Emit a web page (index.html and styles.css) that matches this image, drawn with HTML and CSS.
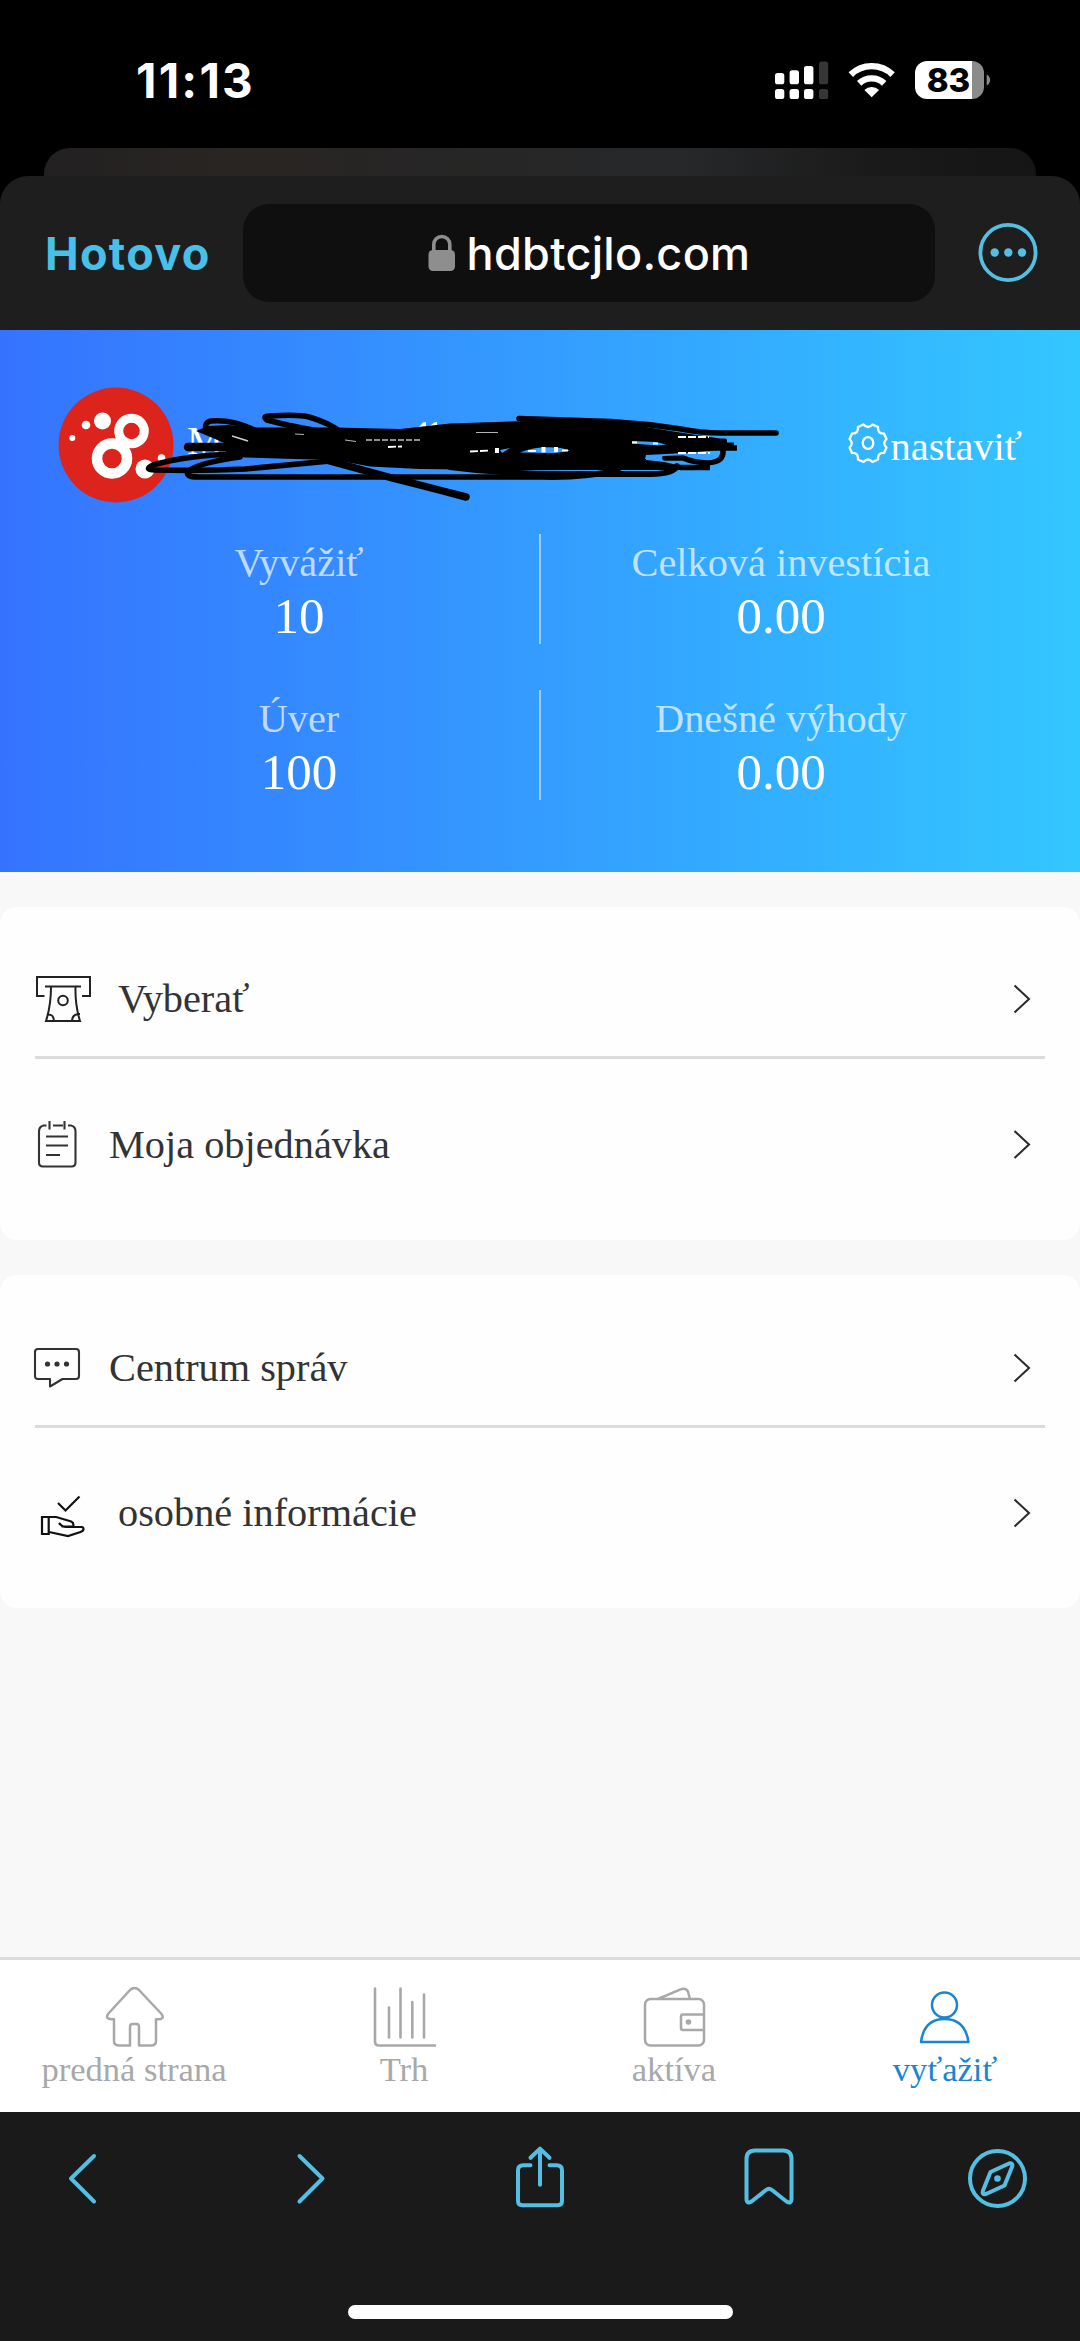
FILE: index.html
```html
<!DOCTYPE html>
<html lang="sk">
<head>
<meta charset="utf-8">
<title>hdbtcjlo.com</title>
<link rel="stylesheet" href="styles.css">
</head>
<body>
<div class="screen">
  <header class="status">
    <span class="clock">11:13</span>
    <svg class="status-icons" viewBox="770 55 225 50" width="225" height="50">
      <g fill="#fff">
        <rect x="775" y="73" width="9.3" height="11.3" rx="2.6"/><rect x="789.6" y="70.3" width="9.4" height="14" rx="2.6"/><rect x="804" y="66" width="9.4" height="18.3" rx="2.6"/>
        <rect x="775" y="89" width="9.3" height="10" rx="2.6"/><rect x="789.6" y="89" width="9.4" height="10" rx="2.6"/><rect x="804" y="89" width="9.4" height="10" rx="2.6"/>
      </g>
      <g fill="#363636"><rect x="819" y="61.6" width="9.2" height="22.7" rx="2.6"/><rect x="819" y="89" width="9.2" height="10" rx="2.6"/></g>
      <g fill="none" stroke="#fff" stroke-width="6.4">
        <path d="M850.8 74.6a30 30 0 0 1 41.8 0"/>
        <path d="M859.2 83.4a18 18 0 0 1 25 0"/>
      </g>
      <path d="M871.7 97.3l-7.3-7.4a10.6 10.6 0 0 1 14.6 0z" fill="#fff"/>
      <clipPath id="batt"><rect x="915" y="61" width="69" height="38" rx="12"/></clipPath>
      <g clip-path="url(#batt)"><rect x="915" y="61" width="57" height="38" fill="#fff"/><rect x="972" y="61" width="12" height="38" fill="#8b8b8b"/></g>
      <path d="M986.7 74.5c4.600 2.500 4.600 8.500 0 11z" fill="#8b8b8b"/>
      <text class="battery-text" x="948.500" y="92" text-anchor="middle">83</text>
    </svg>
  </header>
  <div class="back-card"></div>
  <section class="sheet">
    <div class="address-bar">
      <span class="done">Hotovo</span>
      <div class="url">
        <svg class="lock" viewBox="0 0 28 36" width="28" height="36"><rect x="0.500" y="15" width="26.500" height="21" rx="4.500" fill="#8e8e8e"/><path d="M5.800 17v-7.500a8 8 0 0 1 16 0V17" fill="none" stroke="#8e8e8e" stroke-width="3.600"/></svg>
        <span>hdbtcjlo.com</span>
      </div>
      <svg class="more" viewBox="0 0 60 60" width="60" height="60"><circle cx="30" cy="29.500" r="27.600" fill="none" stroke="#54bfe2" stroke-width="3.800"/><g fill="#54bfe2"><circle cx="16.700" cy="29.500" r="4.200"/><circle cx="30.300" cy="29.500" r="4.200"/><circle cx="44" cy="29.500" r="4.200"/></g></svg>
    </div>
  </section>
  <main class="page">
    <section class="hero">
      <div class="profile">
        <svg class="avatar" viewBox="0 0 116 116" width="116" height="116">
          <circle cx="58" cy="58" r="57.500" fill="#dc241d"/>
          <g fill="none" stroke="#fff"><circle cx="73.500" cy="44" r="12.800" stroke-width="9"/><circle cx="54" cy="71.500" r="15" stroke-width="10.500"/></g>
          <g fill="#fff"><circle cx="44.500" cy="34" r="8.500"/><circle cx="28" cy="38" r="4.300"/><circle cx="14.300" cy="51" r="3"/><circle cx="87" cy="82" r="9.500"/><circle cx="103.500" cy="71" r="3.800"/></g>
        </svg>
        <span class="name">M</span>
        <div class="settings">
          <svg viewBox="0 0 44 44" width="44" height="44"><g fill="none" stroke="#fff" stroke-width="2.300" stroke-linejoin="round"><path d="M17.500 3.500Q22 8.500 26.500 3.500L32 6Q31.500 13 38 12.500L40.500 18Q36 22 40.500 26.500L38 32Q31.500 31.500 32 38.500L26.500 41Q22 36 17.500 41L12 38.500Q12.500 31.500 6 32L3.500 26.500Q8 22 3.500 18L6 12.500Q12.500 13 12 6z"/><ellipse cx="22" cy="22" rx="5.300" ry="5.800"/></g></svg>
          <span>nastaviť</span>
        </div>
      </div>
      <svg class="scribble" viewBox="140 400 660 110" width="660" height="110">
        <path d="M419 427l4-4.500 3-.5v5zM430 426l4-3.500 3-.5v4zM490 424q5-4 9 0zM598 424h16v2h-16zM288 425v-2.500h3v2.500z" fill="#fff"/>
        <path d="M196 431l12-5 20-1 27 2.500h80l65 1.500 50-5.500 60-2 55-1.500 62 4 50 8 43 6.500h6v4h8v6l-54 5-34 2.500v4l18 2 18 4v4H500l-80-1-50-2.500-35-6.500-40-1-50-1.500-20-3 3-10z" fill="#000"/>
        <g fill="none" stroke="#000" stroke-width="5.600" stroke-linecap="round" stroke-linejoin="round">
          <path d="M206 431q-2-9 5-10q20-2 44 9"/>
          <path d="M340 434Q300 429 267 420q-5-4 2-4q30-2 40 1q18 5 32 15"/>
          <path d="M188 447h60" stroke-width="8.500"/>
          <path d="M238 454q-50 1-85 11q-10 5 2 5q50 1 90-1l85-8"/>
          <path d="M240 457q-38 5-52 14q-3 6 10 6h345q42 1 75-7"/>
          <path d="M450 467q60 8 130 7h70q24 0 27-8" stroke-width="6"/>
          <path d="M326 460l66 18q32 8 74 19" stroke-width="7.500"/>
          <path d="M519 418.500l92 3q35 2 70 7.500q20 4 40 4h55"/>
          <path d="M680 467.500h30M680 442h47M700 448h37" stroke-linecap="butt"/>
          <path d="M723 450q1 13-16 12.500q-14 0-24-4.500h-18"/>
        </g>
        <g fill="#39a2ff">
          <path d="M520 452.500q17-7 41-4.500l9 2.500-14 2.500zM646 455l30-1.500 30 .5 10 2-4 4q-14 1-26-5l-24 1v3h-17zM632 441l24 1 10 2.500-8 1-26-2zM500 450l10-2-8 5z"/>
        </g>
        <g fill="none" stroke="#fff" stroke-width="1.800">
          <path d="M232 436l16 5" opacity=".8"/><path d="M295 434l9 .5M345 440l11 1.500M476 432.500h22" stroke-width="1.200" opacity=".7"/>
          <path d="M366 440h54" stroke-width="1.300" stroke-dasharray="6 2" opacity=".75"/>
          <path d="M388 447l14-.5M470 451.500l20-1M528 451h8M562 450.500h6M632 442.500h5M653 443.500h5M678 437h31M678 453h32" stroke-dasharray="8 2"/>
          <path d="M543.500 447v5.500M556 447v5M497 448v5" stroke-width="4"/>
        </g>
      </svg>
      <div class="stats">
        <div class="stat"><span class="label">Vyvážiť</span><span class="value">10</span></div>
        <div class="stat"><span class="label">Celková investícia</span><span class="value">0.00</span></div>
        <div class="stat"><span class="label">Úver</span><span class="value">100</span></div>
        <div class="stat"><span class="label">Dnešné výhody</span><span class="value">0.00</span></div>
      </div>
    </section>
    <section class="card">
      <div class="row wide">
        <svg viewBox="0 0 56 56" width="56" height="56"><g fill="none" stroke="#222" stroke-width="2"><path d="M9.500 25H2V6h53v19h-8M10 15.500h36M16 16q0 18-5 34h34q-5-16-4.500-34M12 43.500q6.500-1 7 6.500M45 43q-8 0-8 7"/><circle cx="28" cy="29.500" r="4.800"/></g></svg>
        <span>Vyberať</span><svg class="arrow" viewBox="0 0 20 32" width="20" height="32"><path d="M2.500 2.500L17 16 2.500 29.500" fill="none" stroke="#2c2c2c" stroke-width="2.100"/></svg>
      </div>
      <div class="row">
        <svg viewBox="0 0 46 56" width="46" height="56"><g fill="none" stroke="#333" stroke-width="2.100"><path d="M11.500 8.500H8.500Q4 9.500 4 14.500v31q0 4 4 4h28.500q4 0 4-4v-31q0-5-4.500-6h-3M18 8.500h10M14.500 4v8.500M29.500 4v8.500M11 19.500h22M11 28.500h22M11 38h14"/></g></svg>
        <span>Moja objednávka</span><svg class="arrow" viewBox="0 0 20 32" width="20" height="32"><path d="M2.500 2L17 15.500 2.500 29" fill="none" stroke="#2c2c2c" stroke-width="2.100"/></svg>
      </div>
    </section>
    <section class="card second">
      <div class="row">
        <svg viewBox="0 0 46 56" width="46" height="56"><path d="M3 9h38q3 0 3 3v24q0 3-3 3H27.500L15 46.500V39H3q-3 0-3-3V12q0-3 3-3z" fill="none" stroke="#333" stroke-width="2.100" stroke-linejoin="round" overflow="visible"/><g fill="#333"><circle cx="12.500" cy="24" r="2.600"/><circle cx="22" cy="24" r="2.600"/><circle cx="31.500" cy="24" r="2.600"/></g></svg>
        <span>Centrum správ</span><svg class="arrow" viewBox="0 0 20 32" width="20" height="32"><path d="M2.500 2.500L17 16 2.500 29.500" fill="none" stroke="#2c2c2c" stroke-width="2.100"/></svg>
      </div>
      <div class="row wide">
        <svg viewBox="0 0 56 56" width="56" height="56"><g fill="none" stroke="#111" stroke-width="2.200"><path d="M23 18l7.500 7.500L44.500 11.500M7 32h6.700v17H7zM13.700 32h7.500l15 4.500q3 1.500 2 5H26.500M24 38q3 4 7 4h15.500q2 0 2 2t-3 3L33 51l-19-4"/></g></svg>
        <span>osobné informácie</span><svg class="arrow" viewBox="0 0 20 32" width="20" height="32"><path d="M2.500 2.500L17 16 2.500 29.500" fill="none" stroke="#2c2c2c" stroke-width="2.100"/></svg>
      </div>
    </section>
  </main>
  <nav class="tabs">
    <div class="tab"><svg viewBox="0 0 64 64" width="64" height="64"><path d="M28 4q4.500-4 9 0l22.500 24q3.500 5-3 5.200h-2.500V55q0 4.500-5 4.500H37V41q0-3-2.500-3h-4Q28 38 28 41v18.500H17.500Q12 59.500 12 55V33.200H9.500Q3 33 6 28z" fill="none" stroke="#a8a8a8" stroke-width="2.500" stroke-linejoin="round"/></svg><span>predná strana</span></div>
    <div class="tab"><svg viewBox="0 0 64 64" width="64" height="64"><path d="M3 2.500v53q0 4 4 4h56M17 21.500v30M28.500 2.500v49M40.300 16v35.500M52 8.500v43" fill="none" stroke="#a8a8a8" stroke-width="2.600" stroke-linecap="round"/></svg><span>Trh</span></div>
    <div class="tab"><svg viewBox="0 0 64 64" width="64" height="64"><g fill="none" stroke="#a8a8a8" stroke-width="2.500"><rect x="3" y="13" width="59" height="46.500" rx="5.500"/><path d="M16 13l22-9.300q6-2.500 8 2l2 7.300M62 28.500H41q-2 0-2 2v11.500q0 2 2 2h21"/></g><circle cx="46.500" cy="36" r="2.800" fill="#a8a8a8"/></svg><span>aktíva</span></div>
    <div class="tab active"><svg viewBox="0 0 64 64" width="64" height="64"><g fill="none" stroke="#1a85d0" stroke-width="2.500"><circle cx="31.500" cy="19" r="12.500"/><path d="M8 56Q11 33 31.500 33T55.500 56z" stroke-linejoin="round"/></g></svg><span>vyťažiť</span></div>
  </nav>
  <footer class="toolbar">
    <div class="tools">
      <svg viewBox="0 0 60 64" width="60" height="64"><path d="M42 9L19 31.500 42 54.500"/></svg>
      <svg viewBox="0 0 60 64" width="60" height="64"><path d="M18.500 9L41.500 31.500 18.500 54.500"/></svg>
      <svg viewBox="0 0 60 64" width="60" height="64"><path d="M20.500 17.500h-7q-5.500 0-5.500 5v30.500q0 4.500 4.500 4.500h35q4.500 0 4.500-4.500V22.500q0-5-5.500-5h-7M30 37V1.500M20.500 10L30 .8l9.500 9.200" transform="translate(0 .8)"/></svg>
      <svg viewBox="0 0 60 64" width="60" height="64"><path d="M7.500 12q0-8.500 8.500-8.500h28q8.500 0 8.500 8.500v39.500q0 6-5 3L33 43q-3-2.500-6 0L12.500 54.500q-5 3-5-3z"/></svg>
      <svg viewBox="0 0 60 64" width="60" height="64"><circle cx="29.500" cy="31.500" r="27.500"/><path d="M22.500 25L41 16.500q4-1 3.300 2.800L36.500 38.500 18 47q-4.500 1-3-3.500z"/><circle class="dot" cx="29.500" cy="31.500" r="3.300"/></svg>
    </div>
    <div class="home-indicator"></div>
  </footer>
</div>
</body>
</html>
```
FILE: styles.css
```css
* { box-sizing: border-box; }
body { margin: 0; background: #000; }
svg { display: block; flex: none; overflow: visible; }

.screen {
  width: 1080px;
  height: 2341px;
  display: flex;
  flex-direction: column;
  overflow: hidden;
  font-family: "Liberation Serif", serif;
}

/* System status bar */
.status {
  height: 148px;
  padding: 55px 85px 0 136px;
  display: flex;
  justify-content: space-between;
  align-items: flex-start;
  color: #fff;
}
.clock {
  font: 650 47.5px/51px Inter, sans-serif;
  letter-spacing: 2.2px;
}
.battery-text {
  font: 800 33px Inter, sans-serif;
  fill: #000;
}
.back-card {
  height: 28px;
  margin: 0 44px;
  border-radius: 26px 26px 0 0;
  background: linear-gradient(90deg, #222021 0%, #292523 18%, #262626 45%, #27282a 64%, #191919 85%, #151515 100%);
}

/* In-app browser header */
.sheet {
  height: 154px;
  background: #1e1e1e;
  border-radius: 28px 28px 0 0;
}
.address-bar {
  height: 153px;
  padding: 1px 42px 0 45px;
  display: flex;
  align-items: center;
  font-family: Inter, sans-serif;
}
.done {
  width: 198px;
  font-size: 45px;
  font-weight: 700;
  letter-spacing: 1.3px;
  color: #48c0e8;
}
.url {
  width: 692px;
  height: 98px;
  border-radius: 26px;
  background: #0f0f0f;
  display: flex;
  align-items: center;
  justify-content: center;
  gap: 11px;
  color: #fff;
  font-size: 45px;
  font-weight: 500;
  letter-spacing: .3px;
}
.more { margin-left: auto; }

/* Page content */
.page {
  height: 1627px;
  background: #f8f8f8;
}
.hero {
  position: relative;
  height: 542px;
  padding: 57px 58px 0;
  background: linear-gradient(90deg, #3573ff, #349cff 50%, #33c7ff);
  color: #fff;
  font-size: 40.32px;
}
.profile {
  height: 116px;
  display: flex;
  align-items: center;
}
.name {
  margin: -10px 0 0 13px;
}
.settings {
  margin-left: auto;
  display: flex;
  align-items: center;
}
.settings svg { margin: 0 1px 5px 0; }
.settings span { line-height: 46px; margin-top: 3px; }
.scribble {
  position: absolute;
  left: 140px;
  top: 70px;
}
.stats {
  margin-top: 31px;
  display: grid;
  grid-template-columns: 1fr 1fr;
  row-gap: 46px;
}
.stat {
  height: 110px;
  padding-top: 4px;
  display: flex;
  flex-direction: column;
  align-items: center;
  position: relative;
}
.stat:nth-child(odd)::after {
  content: "";
  position: absolute;
  right: -1px;
  top: 0;
  width: 2px;
  height: 110px;
  background: rgba(255, 255, 255, .5);
}
.label { line-height: 50px; color: rgba(255, 255, 255, .7); }
.value { font-size: 51px; line-height: 57px; }

.card {
  height: 333px;
  margin-top: 35px;
  padding: 34px 35px 0;
  border-radius: 17px;
  background: #fefefe;
}
.card.second { padding-top: 35px; }
.row {
  height: 115px;
  display: flex;
  align-items: center;
  gap: 28px;
  font-size: 40.32px;
  color: #333;
}
.row.wide { gap: 27px; }
.row:first-child {
  height: 118px;
  border-bottom: 3px solid #dcdcdc;
}
.row + .row { margin-top: 28px; }
.second .row + .row { margin-top: 27px; }
.arrow { margin: 0 13px 0 auto; }

/* Site tab bar */
.tabs {
  height: 155px;
  border-top: 3px solid #dcdcdc;
  background: #fff;
  display: grid;
  grid-template-columns: repeat(4, 1fr);
  padding: 26px 0 0;
}
.tab {
  display: flex;
  flex-direction: column;
  align-items: center;
  padding-right: 2px;
  font-size: 34.56px;
  line-height: 40px;
  color: #a8a8a8;
}
.tab span { margin-top: -1px; }
.tab.active { color: #1a85d0; padding: 0; }

/* Browser toolbar */
.toolbar {
  flex: 1;
  background: #1a1a1a;
  display: flex;
  flex-direction: column;
  justify-content: space-between;
  align-items: center;
  padding: 35px 0 22px;
}
.tools {
  width: 100%;
  padding: 0 52px;
  display: flex;
  justify-content: space-between;
}
.tools svg {
  fill: none;
  stroke: #54bfe2;
  stroke-width: 4;
  stroke-linecap: round;
  stroke-linejoin: round;
}
.tools .dot { fill: #54bfe2; stroke: none; }
.home-indicator {
  width: 385px;
  height: 14px;
  border-radius: 7px;
  background: #fff;
}
```
